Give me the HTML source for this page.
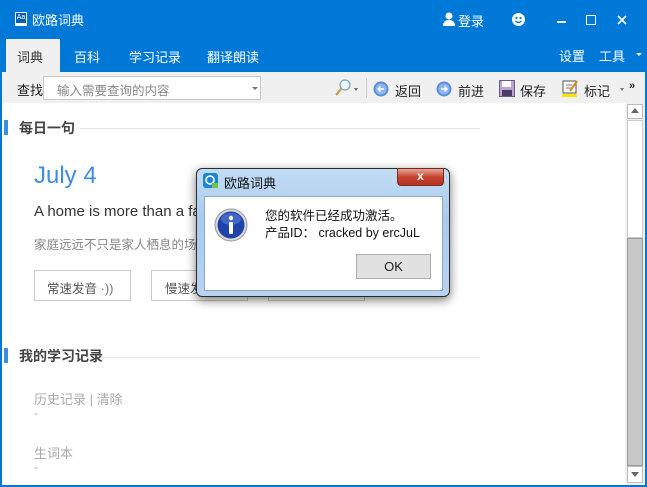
<!DOCTYPE html>
<html><head><meta charset="utf-8"><style>
*{margin:0;padding:0;box-sizing:border-box}
body{width:647px;height:487px;overflow:hidden;background:#0078d7;font-family:"Liberation Sans","Noto Sans CJK SC",sans-serif;position:relative;font-size:13px}
.a{position:absolute}
.w{color:#fff}
</style></head><body>
<div class="a" style="left:15px;top:12px;width:12px;height:14px;background:#fff;border-radius:1px"></div>
<div class="a" style="left:16px;top:13px;width:10px;height:10px;background:#0a5fb0;color:#fff;font-size:7px;line-height:10px;text-align:center">Aa</div>
<div class="a w" style="left:32px;top:10px;font-size:13px">欧路词典</div>
<svg class="a" style="left:443px;top:12px" width="12" height="14"><circle cx="6" cy="4" r="3.5" fill="#fff"/><path d="M0 14 Q0 8 6 8 Q12 8 12 14Z" fill="#fff"/></svg>
<div class="a w" style="left:458px;top:11px;font-size:13px">登录</div>
<svg class="a" style="left:512px;top:13px" width="13" height="13"><circle cx="6.5" cy="6.5" r="6.5" fill="#fff"/><circle cx="4.5" cy="5" r="1.1" fill="#0078d7"/><circle cx="8.5" cy="5" r="1.1" fill="#0078d7"/><path d="M3.5 8 Q6.5 11 9.5 8" stroke="#0078d7" stroke-width="1.3" fill="none"/></svg>
<div class="a" style="left:557px;top:21px;width:9px;height:2px;background:#fff"></div>
<div class="a" style="left:586px;top:15px;width:10px;height:10px;border:1.5px solid #fff"></div>
<svg class="a" style="left:617px;top:15px" width="10" height="10"><path d="M1 1L9 9M9 1L1 9" stroke="#fff" stroke-width="1.6"/></svg>
<div class="a" style="left:6px;top:39px;width:54px;height:34px;background:#f0f0f0"></div>
<div class="a" style="left:17px;top:47px;font-size:13px;color:#333">词典</div>
<div class="a w" style="left:74px;top:47px">百科</div>
<div class="a w" style="left:129px;top:47px">学习记录</div>
<div class="a w" style="left:207px;top:47px">翻译朗读</div>
<div class="a w" style="left:559px;top:46px">设置</div>
<div class="a w" style="left:599px;top:46px">工具</div>
<div class="a" style="left:636px;top:53px;border:3px solid transparent;border-top:3px solid #fff"></div>
<div class="a" style="left:2px;top:72px;width:643px;height:31px;background:#f0f0f0"></div>
<div class="a" style="left:17px;top:80px;color:#222">查找</div>
<div class="a" style="left:43px;top:76px;width:218px;height:24px;background:#fff;border:1px solid #c8c8c8"></div>
<div class="a" style="left:57px;top:80px;color:#888;font-size:12.5px">输入需要查询的内容</div>
<div class="a" style="left:252px;top:87px;border:3px solid transparent;border-top:3px solid #777"></div>
<svg class="a" style="left:334px;top:79px" width="20" height="18"><circle cx="11" cy="6" r="5" fill="#eef6ff" stroke="#7aa" stroke-width="1.2"/><path d="M7.5 9.5L2 16" stroke="#c9a24a" stroke-width="2.2"/></svg>
<div class="a" style="left:354px;top:88px;border:2.5px solid transparent;border-top:3px solid #666"></div>
<div class="a" style="left:366px;top:78px;width:1px;height:20px;background:#ccc"></div>
<svg class="a" style="left:373px;top:81px" width="16" height="16"><circle cx="8" cy="8" r="7.5" fill="#5b8fd6"/><circle cx="8" cy="8" r="5.5" fill="#8fb6ec"/><path d="M11 8H5M7.5 5.5L5 8L7.5 10.5" stroke="#fff" stroke-width="1.5" fill="none"/></svg>
<div class="a" style="left:395px;top:81px;color:#222">返回</div>
<svg class="a" style="left:436px;top:81px" width="16" height="16"><circle cx="8" cy="8" r="7.5" fill="#5b8fd6"/><circle cx="8" cy="8" r="5.5" fill="#8fb6ec"/><path d="M5 8H11M8.5 5.5L11 8L8.5 10.5" stroke="#fff" stroke-width="1.5" fill="none"/></svg>
<div class="a" style="left:458px;top:81px;color:#222">前进</div>
<svg class="a" style="left:499px;top:80px" width="16" height="17"><rect x="0.5" y="0.5" width="15" height="16" fill="#b9a3cf" stroke="#6d5a86"/><rect x="3" y="1" width="9" height="6" fill="#fff"/><rect x="3" y="10" width="10" height="6" fill="#4d3c66"/></svg>
<div class="a" style="left:520px;top:81px;color:#222">保存</div>
<svg class="a" style="left:562px;top:80px" width="17" height="17"><rect x="1" y="1" width="13" height="12" fill="#fff" stroke="#555"/><path d="M4 5H10M4 8H9" stroke="#777"/><path d="M15 1L8 11" stroke="#d98a1a" stroke-width="2"/><rect x="0" y="14" width="15" height="3" fill="#ffe600"/></svg>
<div class="a" style="left:584px;top:81px;color:#222">标记</div>
<div class="a" style="left:620px;top:88px;border:2.5px solid transparent;border-top:3px solid #777"></div>
<div class="a" style="left:629px;top:80px;color:#222;font-size:11px;font-weight:bold">»</div>
<div class="a" style="left:2px;top:103px;width:623px;height:382px;background:#fff"></div>
<div class="a" style="left:4px;top:120px;width:4px;height:15px;background:#3d8ee0"></div>
<div class="a" style="left:19px;top:118px;font-size:14px;color:#444;font-weight:bold">每日一句</div>
<div class="a" style="left:80px;top:128px;width:400px;height:1px;background:#e6e6e6"></div>
<div class="a" style="left:34px;top:162px;font-size:24px;color:#3d8ee0">July 4</div>
<div class="a" style="left:34px;top:203px;font-size:15px;color:#333">A home is more than a fa</div>
<div class="a" style="left:34px;top:234px;font-size:12.5px;color:#888">家庭远远不只是家人栖息的场</div>
<div class="a" style="left:34px;top:270px;width:97px;height:31px;border:1px solid #ccc"></div>
<div class="a" style="left:47px;top:278px;font-size:12.5px;color:#555">常速发音 <span style="font-size:13px;color:#777">·))</span></div>
<div class="a" style="left:151px;top:270px;width:97px;height:31px;border:1px solid #ccc"></div>
<div class="a" style="left:165px;top:278px;font-size:12.5px;color:#555">慢速发</div>
<div class="a" style="left:268px;top:270px;width:97px;height:31px;border:1px solid #ccc"></div>
<div class="a" style="left:4px;top:348px;width:4px;height:15px;background:#3d8ee0"></div>
<div class="a" style="left:19px;top:346px;font-size:14px;color:#444;font-weight:bold">我的学习记录</div>
<div class="a" style="left:101px;top:357px;width:379px;height:1px;background:#e6e6e6"></div>
<div class="a" style="left:34px;top:389px;font-size:13px;color:#aaa">历史记录 | 清除</div>
<div class="a" style="left:34px;top:406px;font-size:12px;color:#aaa">-</div>
<div class="a" style="left:34px;top:443px;font-size:13px;color:#aaa">生词本</div>
<div class="a" style="left:34px;top:460px;font-size:12px;color:#aaa">-</div>
<div class="a" style="left:625px;top:103px;width:20px;height:382px;background:#f0f0f0"></div>
<div class="a" style="left:627px;top:104px;width:16px;height:15px;background:#fff;border:1px solid #bbb"></div>
<div class="a" style="left:631px;top:108px;border:4px solid transparent;border-bottom:5px solid #666;border-top:0"></div>
<div class="a" style="left:627px;top:120px;width:16px;height:118px;background:#fff;border:1px solid #ccc"></div>
<div class="a" style="left:627px;top:238px;width:16px;height:228px;background:#c8c8c8;border:1px solid #999"></div>
<div class="a" style="left:627px;top:466px;width:16px;height:17px;background:#fff;border:1px solid #bbb"></div>
<div class="a" style="left:631px;top:472px;border:4px solid transparent;border-top:5px solid #666;border-bottom:0"></div>
<div class="a" style="left:196px;top:168px;width:254px;height:129px;border-radius:6px;background:linear-gradient(#c3dcf5,#a9cbee 40%,#b7d3f0);border:1px solid #2b2b2b;box-shadow:0 3px 10px rgba(0,0,0,.55)"></div>
<svg class="a" style="left:203px;top:173px" width="16" height="16"><rect x="0" y="0" width="15" height="15" rx="3" fill="#1a86d6"/><circle cx="7" cy="7" r="4" fill="none" stroke="#fff" stroke-width="1.6"/><rect x="9" y="10" width="6" height="5" fill="#6cc43a"/></svg>
<div class="a" style="left:224px;top:173px;font-size:13px;color:#111">欧路词典</div>
<div class="a" style="left:397px;top:168px;width:47px;height:18px;border-radius:0 0 4px 4px;background:linear-gradient(#e6a79a,#c7432e 50%,#b53420);border:1px solid #7a2a1c;color:#fff;text-align:center;font-weight:bold;font-size:12px;line-height:15px">x</div>
<div class="a" style="left:204px;top:196px;width:239px;height:95px;background:#fff;border:1px solid #8ea9c8"></div>
<svg class="a" style="left:214px;top:208px" width="34" height="34"><circle cx="17" cy="17" r="16" fill="#d8d8d8" stroke="#999"/><circle cx="17" cy="17" r="13.5" fill="#1f43a8"/><ellipse cx="17" cy="11" rx="10" ry="6" fill="#5277d0" opacity=".7"/><circle cx="17" cy="10" r="2.2" fill="#fff"/><rect x="15" y="14" width="4" height="12" rx="1" fill="#fff"/></svg>
<div class="a" style="left:265px;top:208px;font-size:12.5px;color:#111;line-height:17px">您的软件已经成功激活。<br>产品ID： cracked by ercJuL</div>
<div class="a" style="left:356px;top:254px;width:75px;height:25px;background:#e1e1e1;border:1px solid #adadad;text-align:center;line-height:23px;font-size:13px;color:#222">OK</div>
</body></html>
